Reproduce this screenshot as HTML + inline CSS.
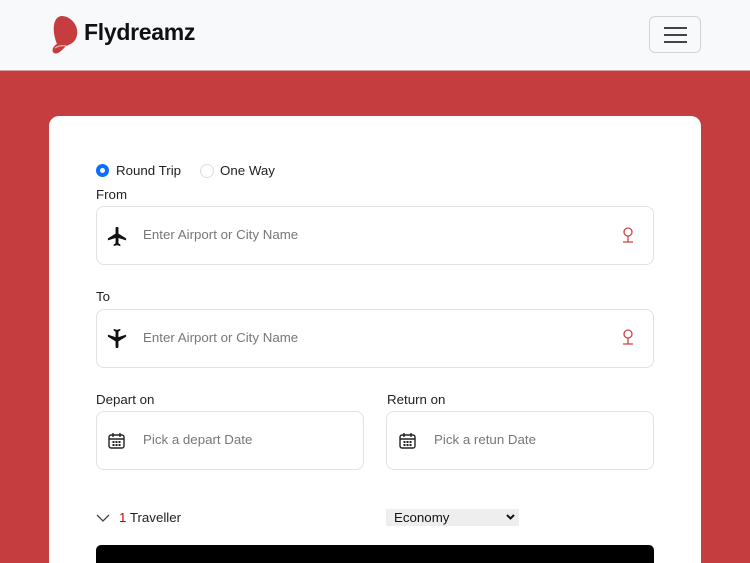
<!DOCTYPE html>
<html><head><style>
*{box-sizing:border-box;margin:0;padding:0}
html,body{width:750px;height:563px;overflow:hidden}
body{background:#c53d3f;font-family:"Liberation Sans",sans-serif;position:relative}
.hdr{position:absolute;left:0;top:0;width:750px;height:71px;background:#f8f9fa;border-bottom:1px solid #d9a0a0}
.brand{position:absolute;left:84px;top:19px;font-size:23px;font-weight:bold;color:#111;letter-spacing:-0.3px}
.tog{position:absolute;left:649px;top:16px;width:52px;height:37px;border:1px solid #d4d4d4;border-radius:6px}
.tog i{position:absolute;left:14px;width:23px;height:2px;background:#444}
.card{position:absolute;left:49px;top:116px;width:652px;height:460px;background:#fff;border-radius:10px}
.t{position:absolute;font-size:13.3px;color:#222}
.box{position:absolute;border:1px solid #e2e2e2;border-radius:8px;background:#fff}
.ph{position:absolute;font-size:13.3px;color:#777}
</style></head><body>
<div class="hdr">
<svg style="position:absolute;left:52px;top:15px" width="28" height="40" viewBox="0 0 28 40"><path d="M10 1C18 1 27 10 25 20C24 26 20 29 14 31C10 35 6 40 2 38C-1 36 1 31 5 29C3 24 1 17 2 10C3 4 6 1 10 1Z" fill="#c53d3f"/><path d="M3 33C6 31 11 30 14 31" stroke="#fff" stroke-width="1.2" fill="none" opacity=".6"/></svg>
<div class="brand">Flydreamz</div>
<div class="tog"><i style="top:10px"></i><i style="top:17px"></i><i style="top:24px"></i></div>
</div>
<div class="card"></div>
<div style="position:absolute;left:96px;top:164px;width:13px;height:13px;border-radius:50%;border:4px solid #0d6efd"></div>
<div class="t" style="left:116px;top:163px">Round Trip</div>
<div style="position:absolute;left:200px;top:164px;width:14px;height:14px;border-radius:50%;border:1px solid #ddd"></div>
<div class="t" style="left:220px;top:163px">One Way</div>
<div class="t" style="left:96px;top:187px">From</div>
<div class="box" style="left:96px;top:206px;width:558px;height:59px"></div>
<svg style="position:absolute;left:106px;top:225px" width="23" height="23" viewBox="0 0 24 24"><path d="M21 16v-2l-8-5V3.5a1.5 1.5 0 0 0-3 0V9l-8 5v2l8-2.5V19l-2 1.5V22l3.5-1 3.5 1v-1.5L13 19v-5.5z" fill="#111"/></svg>
<div class="ph" style="left:143px;top:227px">Enter Airport or City Name</div>
<svg style="position:absolute;left:621px;top:227px" width="14" height="18" viewBox="0 0 14 18"><circle cx="7" cy="5" r="4" fill="none" stroke="#d04545" stroke-width="1.3"/><path d="M7 9v6M2 15h10" stroke="#d04545" stroke-width="1.3"/></svg>
<div class="t" style="left:96px;top:289px">To</div>
<div class="box" style="left:96px;top:309px;width:558px;height:59px"></div>
<svg style="position:absolute;left:105px;top:327px" width="23" height="23" viewBox="0 0 24 24"><path d="M21 16v-2l-8-5V3.5a1.5 1.5 0 0 0-3 0V9l-8 5v2l8-2.5V19l-2 1.5V22l3.5-1 3.5 1v-1.5L13 19v-5.5z" fill="#111" transform="rotate(180 12 12)"/></svg>
<div class="ph" style="left:143px;top:330px">Enter Airport or City Name</div>
<svg style="position:absolute;left:621px;top:329px" width="14" height="18" viewBox="0 0 14 18"><circle cx="7" cy="5" r="4" fill="none" stroke="#d04545" stroke-width="1.3"/><path d="M7 9v6M2 15h10" stroke="#d04545" stroke-width="1.3"/></svg>
<div class="t" style="left:96px;top:392px">Depart on</div>
<div class="t" style="left:387px;top:392px">Return on</div>
<div class="box" style="left:96px;top:411px;width:268px;height:59px"></div>
<div class="box" style="left:386px;top:411px;width:268px;height:59px"></div>
<svg style="position:absolute;left:108px;top:432px" width="17" height="17" viewBox="0 0 17 17"><rect x="1" y="3" width="15" height="13" rx="2" fill="none" stroke="#222" stroke-width="1.4"/><path d="M5 1v4M12 1v4M1 7h15" stroke="#222" stroke-width="1.4"/><g fill="#222"><rect x="4.5" y="9" width="2" height="2"/><rect x="7.5" y="9" width="2" height="2"/><rect x="10.5" y="9" width="2" height="2"/><rect x="4.5" y="12" width="2" height="2"/><rect x="7.5" y="12" width="2" height="2"/><rect x="10.5" y="12" width="2" height="2"/></g></svg>
<svg style="position:absolute;left:399px;top:432px" width="17" height="17" viewBox="0 0 17 17"><rect x="1" y="3" width="15" height="13" rx="2" fill="none" stroke="#222" stroke-width="1.4"/><path d="M5 1v4M12 1v4M1 7h15" stroke="#222" stroke-width="1.4"/><g fill="#222"><rect x="4.5" y="9" width="2" height="2"/><rect x="7.5" y="9" width="2" height="2"/><rect x="10.5" y="9" width="2" height="2"/><rect x="4.5" y="12" width="2" height="2"/><rect x="7.5" y="12" width="2" height="2"/><rect x="10.5" y="12" width="2" height="2"/></g></svg>
<div class="ph" style="left:143px;top:432px">Pick a depart Date</div>
<div class="ph" style="left:434px;top:432px">Pick a retun Date</div>
<svg style="position:absolute;left:96px;top:514px" width="14" height="9" viewBox="0 0 14 9"><path d="M1 1l6 6 6-6" fill="none" stroke="#444" stroke-width="1.3"/></svg>
<div class="t" style="left:119px;top:510px"><span style="color:#c00">1</span> Traveller</div>
<div style="position:absolute;left:386px;top:509px;width:133px;height:17px;background:#eee;font-size:13.3px;color:#111;padding:1px 0 0 8px">Economy
<svg style="position:absolute;right:4px;top:5px" width="9" height="7" viewBox="0 0 9 7"><path d="M1 1l3.5 3.5L8 1" fill="none" stroke="#111" stroke-width="2"/></svg></div>
<div style="position:absolute;left:96px;top:545px;width:558px;height:30px;background:#000;border-radius:5px"></div>
</body></html>
